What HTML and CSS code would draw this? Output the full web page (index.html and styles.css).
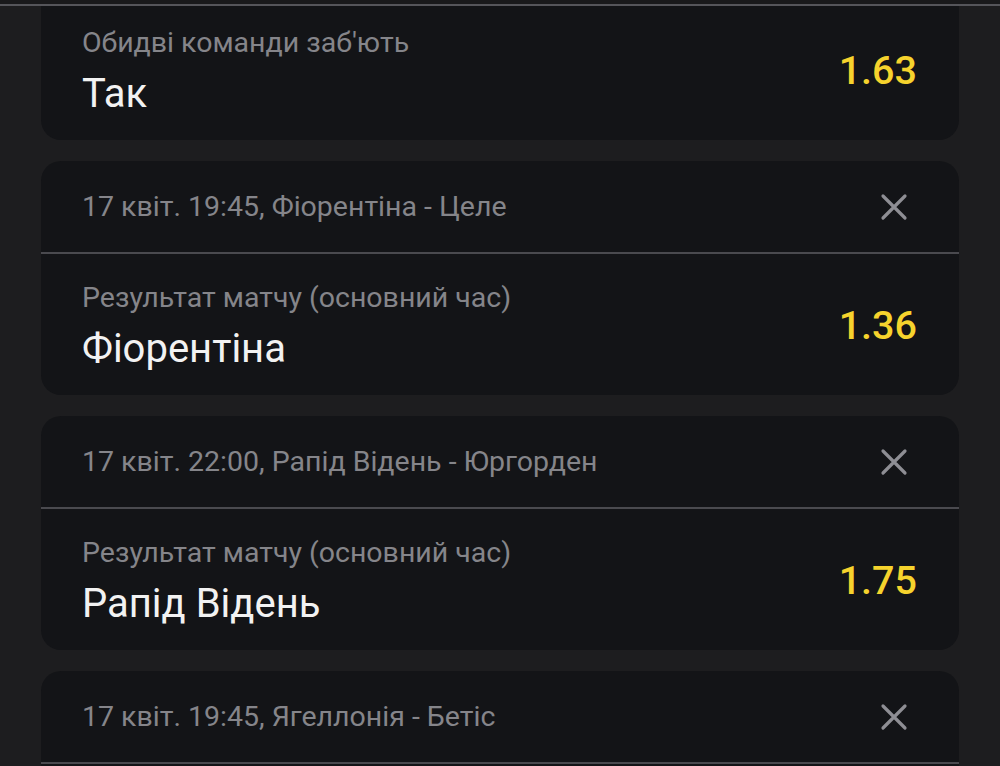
FILE: index.html
```html
<!DOCTYPE html>
<html lang="uk">
<head>
    <meta charset="UTF-8">
    <meta name="viewport" content="width=device-width, initial-scale=1.0">
    <title>Купон</title>
    <link rel="stylesheet" href="styles.css">
</head>
<body>
    <div class="top-bar"></div>

    <div class="bet-list">
        <!-- First bet, scrolled so that only its outcome is visible -->
        <div class="bet-card first">
            <div class="bet-body">
                <div class="bet-info">
                    <p class="market">Обидві команди заб'ють</p>
                    <p class="outcome">Так</p>
                </div>
                <span class="odds">1.63</span>
            </div>
        </div>

        <div class="bet-card">
            <div class="bet-head">
                <span class="event">17 квіт. 19:45, Фіорентіна - Целе</span>
                <button class="remove-btn" aria-label="Видалити">
                    <svg viewBox="0 0 28 28" width="28" height="28"><path d="M3 3 L25 25 M25 3 L3 25"/></svg>
                </button>
            </div>
            <div class="bet-body">
                <div class="bet-info">
                    <p class="market">Результат матчу (основний час)</p>
                    <p class="outcome">Фіорентіна</p>
                </div>
                <span class="odds">1.36</span>
            </div>
        </div>

        <div class="bet-card">
            <div class="bet-head">
                <span class="event">17 квіт. 22:00, Рапід Відень - Юргорден</span>
                <button class="remove-btn" aria-label="Видалити">
                    <svg viewBox="0 0 28 28" width="28" height="28"><path d="M3 3 L25 25 M25 3 L3 25"/></svg>
                </button>
            </div>
            <div class="bet-body">
                <div class="bet-info">
                    <p class="market">Результат матчу (основний час)</p>
                    <p class="outcome">Рапід Відень</p>
                </div>
                <span class="odds">1.75</span>
            </div>
        </div>

        <!-- Last bet, only its header is on screen -->
        <div class="bet-card">
            <div class="bet-head">
                <span class="event">17 квіт. 19:45, Ягеллонія - Бетіс</span>
                <button class="remove-btn" aria-label="Видалити">
                    <svg viewBox="0 0 28 28" width="28" height="28"><path d="M3 3 L25 25 M25 3 L3 25"/></svg>
                </button>
            </div>
            <div class="bet-body"></div>
        </div>
    </div>
</body>
</html>
```

FILE: styles.css
```css
* {
    margin: 0;
    padding: 0;
    box-sizing: border-box;
}

body {
    background: #1d1d1f;
    font-family: Roboto, 'Noto Sans', sans-serif;
    color: #f2f2f2;
    height: 766px;
    overflow: hidden;
}

/* Thin strip of the sticky header above the list */
.top-bar {
    position: fixed;
    top: 0;
    left: 0;
    right: 0;
    height: 6px;
    background: #19191b;
    border-bottom: 2px solid #55555a;
    z-index: 2;
}

.bet-list {
    display: flex;
    flex-direction: column;
    gap: 21px;
    padding: 0 41px;
}

.bet-card {
    background: #131417;
    border-radius: 20px;
    overflow: hidden;
}

.bet-card.first {
    margin-top: -1px;
    border-top-left-radius: 0;
    border-top-right-radius: 0;
}

.bet-head {
    height: 93px;
    display: flex;
    align-items: center;
    justify-content: space-between;
    padding: 0 46px 0 41px;
    border-bottom: 2px solid #4a4a4f;
}

.event {
    font-size: 28.5px;
    color: #85858a;
}

.remove-btn {
    background: none;
    border: none;
    width: 38px;
    height: 38px;
    display: flex;
    align-items: center;
    justify-content: center;
    cursor: pointer;
}

.remove-btn svg {
    stroke: #8e8e94;
    stroke-width: 3.2;
    stroke-linecap: round;
    fill: none;
}

.bet-body {
    height: 141px;
    display: flex;
    align-items: center;
    justify-content: space-between;
    padding: 0 42px 0 41px;
}

.bet-info {
    padding-top: 6px;
}

.market {
    font-size: 28.5px;
    line-height: 38px;
    color: #85858a;
}

.outcome {
    font-size: 40px;
    line-height: 54px;
    color: #f2f2f2;
    margin-top: 5px;
}

.odds {
    font-size: 39.5px;
    font-weight: 500;
    color: #f6d32d;
    margin-top: 2px;
}
```
